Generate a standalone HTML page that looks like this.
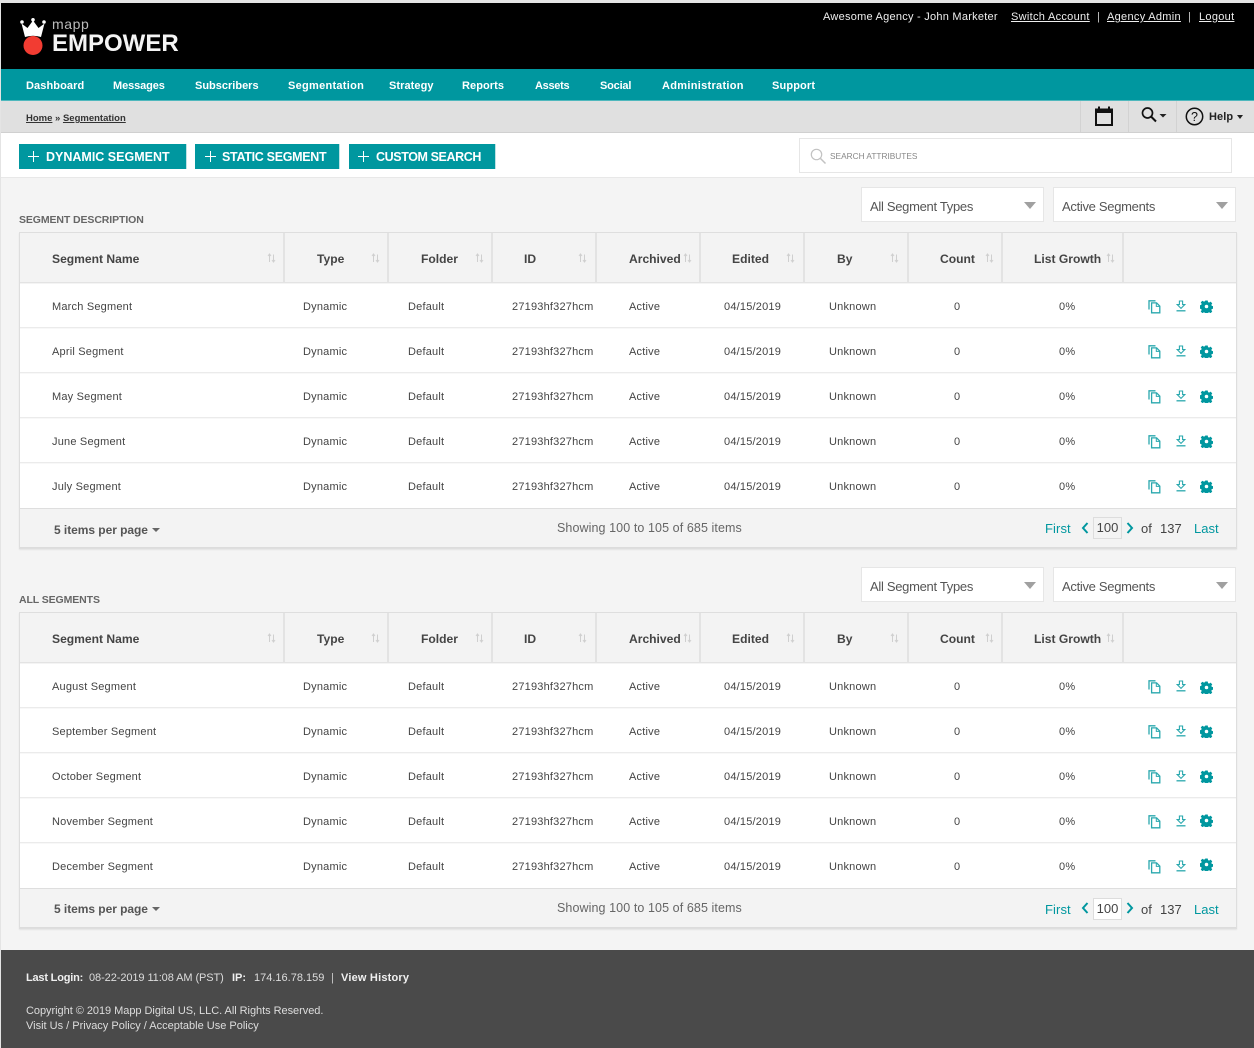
<!DOCTYPE html>
<html>
<head>
<meta charset="utf-8">
<style>
*{box-sizing:border-box}
html,body{margin:0;padding:0}
body{width:1254px;height:1048px;position:relative;overflow:hidden;background:#f4f4f4;font-family:"Liberation Sans",sans-serif;color:#444}
.a{position:absolute;white-space:nowrap}
a{color:inherit}
.nav{position:absolute;top:80px;font-size:11px;font-weight:bold;color:#fff;line-height:13px;white-space:nowrap}
.btn{position:absolute;top:144px;height:25px;background:#00979f;color:#fff;font-size:12.5px;font-weight:bold;line-height:26px;white-space:nowrap;border-right:1px solid #bfe2e4}
.btn i{position:absolute;left:10px;top:7px;width:11px;height:11px}
.btn i:before{content:"";position:absolute;left:0;top:4.5px;width:11px;height:1.6px;background:#fff}
.btn i:after{content:"";position:absolute;left:4.7px;top:0;width:1.6px;height:11px;background:#fff}
.btn span{position:absolute;left:27px}
.sel{position:absolute;height:35px;width:183px;background:#fff;border:1px solid #e6e6e6;font-size:13px;line-height:37px;padding-left:8px;color:#555;letter-spacing:-.3px}
.sel:after{content:"";position:absolute;right:7px;top:14px;border-left:6px solid transparent;border-right:6px solid transparent;border-top:7px solid #a0a0a0}
.lbl{position:absolute;left:19px;font-size:10.5px;font-weight:bold;color:#666;letter-spacing:-.1px;line-height:13px}
.tb{position:absolute;left:19px;width:1218px;height:317px;border:1px solid #dedede;background:#fff;box-shadow:0 1px 1px #e4e4e4}
.hd{position:absolute;left:0;top:0;width:1216px;height:50px;background:#f3f3f3;border-bottom:1px solid #e3e3e3;box-shadow:0 1px 0 #f4f4f4}
.hd b{position:absolute;top:19px;font-size:12.1px;line-height:15px;color:#444;white-space:nowrap}
.hd u{position:absolute;top:0;width:2px;height:50px;background:#e3e3e3}
.hd svg{position:absolute;top:20px}
.r{position:absolute;left:0;width:1216px;height:45px;border-bottom:1px solid #ebebeb;box-shadow:0 1px 0 #f8f8f8;font-size:11px;color:#444;letter-spacing:.2px}
.r span{position:absolute;top:17px;line-height:14px;white-space:nowrap}
.r svg{position:absolute}
.ft{position:absolute;left:0;top:275px;width:1216px;height:40px;background:#f3f3f3;border-top:1px solid #dedede;border-bottom:1px solid #dcdcdc}
.ft span{position:absolute;white-space:nowrap;line-height:15px}
.l{color:#00979f}
</style>
</head>
<body>
<svg width="0" height="0" style="position:absolute">
<defs>
<symbol id="sort" viewBox="0 0 9 10"><path d="M2.500 9V1.500M1 3l1.500-2L4 3" stroke="#cfcfcf" stroke-width="1" fill="none"/><path d="M6.500 1.500V9M5 7l1.500 2L8 7" stroke="#cfcfcf" stroke-width="1" fill="none"/></symbol>
<symbol id="copy" viewBox="0 0 13 14"><path d="M1 9.500V.8h6.500" stroke="#2aa8ae" stroke-width="1.300" fill="none"/><path d="M3.600 2.900h5l3.200 3.200v6.700H3.600z" stroke="#2aa8ae" stroke-width="1.300" fill="#fff"/><path d="M8.300 2.900v3.500h3.500" stroke="#2aa8ae" stroke-width="1" fill="none"/></symbol>
<symbol id="dl" viewBox="0 0 10 13"><path d="M3.400 1h3.200v3.600h2.200L5 8.400 1.200 4.600h2.200z" stroke="#2aa8ae" stroke-width="1.100" fill="none"/><path d="M.5 10.800h9" stroke="#2aa8ae" stroke-width="1.300"/></symbol>
<symbol id="gear" viewBox="0 0 14 14"><path fill="#00979f" fill-rule="evenodd" d="M5.700.5h2.600l.4 1.800 1.100.5 1.600-1 1.800 1.800-1 1.600.5 1.100 1.800.4v2.600l-1.800.4-.5 1.100 1 1.600-1.800 1.800-1.600-1-1.100.5-.4 1.800H5.700l-.4-1.800-1.100-.5-1.600 1-1.800-1.800 1-1.600-.5-1.100-1.800-.4V5.700l1.800-.4.5-1.100-1-1.600L2.600.8l1.600 1 1.100-.5zM7 5.100a1.900 1.900 0 1 0 0 3.800 1.900 1.900 0 0 0 0-3.800z"/></symbol>
</defs>
</svg>

<!-- top -->
<div class="a" style="left:0;top:0;width:1254px;height:3px;background:#e4e4e4"></div>
<div class="a" style="left:0;top:0;width:1px;height:1048px;background:#e4e4e4;z-index:5"></div>
<div class="a" style="left:0;top:3px;width:1254px;height:66px;background:#000"></div>
<svg class="a" style="left:20px;top:18px" width="27" height="38" viewBox="0 0 27 38">
<path d="M5 19L1.500 5.500 7.500 10 13 2.500 18.500 10l6-4.500L21 19q-8-2.500-16 0z" fill="#fff"/>
<circle cx="2" cy="4" r="1.800" fill="#fff"/><circle cx="13" cy="1.800" r="1.800" fill="#fff"/><circle cx="24" cy="4" r="1.800" fill="#fff"/>
<circle cx="13" cy="27.500" r="9.500" fill="#f23c32"/>
</svg>
<div class="a" style="left:52px;top:17px;font-size:14px;line-height:15px;color:#bbb;letter-spacing:.6px">mapp</div>
<div class="a" style="left:52px;top:31px;font-size:24px;line-height:26px;font-weight:bold;color:#f4f4f4">EMPOWER</div>
<div class="a" style="left:823px;top:11px;font-size:11px;line-height:13px;color:#eee;letter-spacing:.25px">Awesome Agency - John Marketer</div>
<div class="a" style="left:1011px;top:11px;font-size:11px;line-height:13px;color:#eee;letter-spacing:.3px"><a href="#">Switch Account</a></div>
<div class="a" style="left:1097px;top:11px;font-size:11px;line-height:13px;color:#ccc">|</div>
<div class="a" style="left:1107px;top:11px;font-size:11px;line-height:13px;color:#eee;letter-spacing:.3px"><a href="#">Agency Admin</a></div>
<div class="a" style="left:1188px;top:11px;font-size:11px;line-height:13px;color:#ccc">|</div>
<div class="a" style="left:1199px;top:11px;font-size:11px;line-height:13px;color:#eee;letter-spacing:.3px"><a href="#">Logout</a></div>

<!-- nav -->
<div class="a" style="left:0;top:69px;width:1254px;height:32px;background:#00979f;border-bottom:1px solid #4fb8bd"></div>
<div class="nav" style="left:26px;letter-spacing:.1px">Dashboard</div>
<div class="nav" style="left:113px;letter-spacing:-.1px">Messages</div>
<div class="nav" style="left:195px">Subscribers</div>
<div class="nav" style="left:288px;letter-spacing:.28px">Segmentation</div>
<div class="nav" style="left:389px;letter-spacing:.07px">Strategy</div>
<div class="nav" style="left:462px;letter-spacing:.07px">Reports</div>
<div class="nav" style="left:535px;letter-spacing:-.3px">Assets</div>
<div class="nav" style="left:600px;letter-spacing:-.2px">Social</div>
<div class="nav" style="left:662px;letter-spacing:.3px">Administration</div>
<div class="nav" style="left:772px;letter-spacing:.14px">Support</div>

<!-- breadcrumb bar -->
<div class="a" style="left:0;top:101px;width:1254px;height:32px;background:#e0e0e0;border-bottom:1px solid #d0d0d0"></div>
<div class="a" style="left:26px;top:113px;font-size:9.500px;line-height:12px;font-weight:bold;color:#333"><a href="#">Home</a> » <a href="#">Segmentation</a></div>
<div class="a" style="left:1080px;top:101px;width:1px;height:31px;background:#d2d2d2"></div>
<div class="a" style="left:1128px;top:101px;width:1px;height:31px;background:#d2d2d2"></div>
<div class="a" style="left:1176px;top:101px;width:1px;height:31px;background:#d2d2d2"></div>
<svg class="a" style="left:1094px;top:105px" width="20" height="22" viewBox="0 0 20 22"><path d="M2 4.500h16v15.500H2z" fill="none" stroke="#111" stroke-width="2"/><path d="M1.500 4h17v4h-17z" fill="#111"/><path d="M5 1.500v3M15 1.500v3" stroke="#111" stroke-width="2"/></svg>
<svg class="a" style="left:1141px;top:106px" width="27" height="18" viewBox="0 0 27 18"><circle cx="6.500" cy="7" r="5" fill="none" stroke="#111" stroke-width="1.700"/><path d="M10 10.500l5 5" stroke="#111" stroke-width="2"/><path d="M18.500 8h7L22 11.500z" fill="#222"/></svg>
<svg class="a" style="left:1185px;top:107px" width="19" height="19" viewBox="0 0 19 19"><circle cx="9.500" cy="9.500" r="8.200" fill="none" stroke="#111" stroke-width="1.500"/><text x="9.500" y="14" text-anchor="middle" font-family="Liberation Sans" font-size="12.500" fill="#111">?</text></svg>
<div class="a" style="left:1209px;top:111px;font-size:11px;line-height:13px;font-weight:bold;color:#222;letter-spacing:.1px">Help</div>
<div class="a" style="left:1237px;top:115px;border-left:3.500px solid transparent;border-right:3.500px solid transparent;border-top:4px solid #222"></div>

<!-- action bar -->
<div class="a" style="left:0;top:133px;width:1254px;height:45px;background:#fff;border-bottom:1px solid #e8e8e8"></div>
<div class="btn" style="left:19px;width:168px"><i style="left:9px"></i><span>DYNAMIC SEGMENT</span></div>
<div class="btn" style="left:195px;width:145px"><i></i><span style="letter-spacing:-.3px">STATIC SEGMENT</span></div>
<div class="btn" style="left:349px;width:147px"><i style="left:9px"></i><span style="letter-spacing:-.4px">CUSTOM SEARCH</span></div>
<div class="a" style="left:799px;top:138px;width:433px;height:35px;background:#fff;border:1px solid #e6e6e6"></div>
<svg class="a" style="left:810px;top:148px" width="17" height="17" viewBox="0 0 17 17"><circle cx="6.500" cy="6.500" r="5.200" fill="none" stroke="#c2c2c2" stroke-width="1.200"/><path d="M10.500 10.500l5 5" stroke="#c2c2c2" stroke-width="1.500"/></svg>
<div class="a" style="left:830px;top:150px;font-size:8.300px;line-height:12px;color:#888">SEARCH ATTRIBUTES</div>

<!-- section 1 -->
<div class="lbl" style="top:214px">SEGMENT DESCRIPTION</div>
<div class="sel" style="left:861px;top:187px">All Segment Types</div>
<div class="sel" style="left:1053px;top:187px">Active Segments</div>

<div class="tb" style="top:232px">
<div class="hd">
<b style="left:32px">Segment Name</b><svg style="left:247px" width="9" height="10"><use href="#sort"/></svg><u style="left:263px"></u>
<b style="left:297px">Type</b><svg style="left:351px" width="9" height="10"><use href="#sort"/></svg><u style="left:367px"></u>
<b style="left:401px">Folder</b><svg style="left:455px" width="9" height="10"><use href="#sort"/></svg><u style="left:471px"></u>
<b style="left:504px">ID</b><svg style="left:558px" width="9" height="10"><use href="#sort"/></svg><u style="left:575px"></u>
<b style="left:609px">Archived</b><svg style="left:663px" width="9" height="10"><use href="#sort"/></svg><u style="left:679px"></u>
<b style="left:712px">Edited</b><svg style="left:766px" width="9" height="10"><use href="#sort"/></svg><u style="left:783px"></u>
<b style="left:817px">By</b><svg style="left:870px" width="9" height="10"><use href="#sort"/></svg><u style="left:887px"></u>
<b style="left:920px">Count</b><svg style="left:965px" width="9" height="10"><use href="#sort"/></svg><u style="left:981px"></u>
<b style="left:1014px">List Growth</b><svg style="left:1086px" width="9" height="10"><use href="#sort"/></svg><u style="left:1102px"></u>
</div>
<div class="r" style="top:50px"><span style="left:32px">March Segment</span><span style="left:283px">Dynamic</span><span style="left:388px">Default</span><span style="left:492px">27193hf327hcm</span><span style="left:609px">Active</span><span style="left:704px">04/15/2019</span><span style="left:809px">Unknown</span><span style="left:934px">0</span><span style="left:1039px">0%</span><svg style="left:1128px;top:17px" width="13" height="14"><use href="#copy"/></svg><svg style="left:1156px;top:17px" width="10" height="13"><use href="#dl"/></svg><svg style="left:1180px;top:17px" width="13" height="13"><use href="#gear"/></svg></div>
<div class="r" style="top:95px"><span style="left:32px">April Segment</span><span style="left:283px">Dynamic</span><span style="left:388px">Default</span><span style="left:492px">27193hf327hcm</span><span style="left:609px">Active</span><span style="left:704px">04/15/2019</span><span style="left:809px">Unknown</span><span style="left:934px">0</span><span style="left:1039px">0%</span><svg style="left:1128px;top:17px" width="13" height="14"><use href="#copy"/></svg><svg style="left:1156px;top:17px" width="10" height="13"><use href="#dl"/></svg><svg style="left:1180px;top:17px" width="13" height="13"><use href="#gear"/></svg></div>
<div class="r" style="top:140px"><span style="left:32px">May Segment</span><span style="left:283px">Dynamic</span><span style="left:388px">Default</span><span style="left:492px">27193hf327hcm</span><span style="left:609px">Active</span><span style="left:704px">04/15/2019</span><span style="left:809px">Unknown</span><span style="left:934px">0</span><span style="left:1039px">0%</span><svg style="left:1128px;top:17px" width="13" height="14"><use href="#copy"/></svg><svg style="left:1156px;top:17px" width="10" height="13"><use href="#dl"/></svg><svg style="left:1180px;top:17px" width="13" height="13"><use href="#gear"/></svg></div>
<div class="r" style="top:185px"><span style="left:32px">June Segment</span><span style="left:283px">Dynamic</span><span style="left:388px">Default</span><span style="left:492px">27193hf327hcm</span><span style="left:609px">Active</span><span style="left:704px">04/15/2019</span><span style="left:809px">Unknown</span><span style="left:934px">0</span><span style="left:1039px">0%</span><svg style="left:1128px;top:17px" width="13" height="14"><use href="#copy"/></svg><svg style="left:1156px;top:17px" width="10" height="13"><use href="#dl"/></svg><svg style="left:1180px;top:17px" width="13" height="13"><use href="#gear"/></svg></div>
<div class="r" style="top:230px;border-bottom:0;box-shadow:none"><span style="left:32px">July Segment</span><span style="left:283px">Dynamic</span><span style="left:388px">Default</span><span style="left:492px">27193hf327hcm</span><span style="left:609px">Active</span><span style="left:704px">04/15/2019</span><span style="left:809px">Unknown</span><span style="left:934px">0</span><span style="left:1039px">0%</span><svg style="left:1128px;top:17px" width="13" height="14"><use href="#copy"/></svg><svg style="left:1156px;top:17px" width="10" height="13"><use href="#dl"/></svg><svg style="left:1180px;top:17px" width="13" height="13"><use href="#gear"/></svg></div>
<div class="ft">
<span style="left:34px;top:14px;font-size:12px;font-weight:bold;color:#555;letter-spacing:-.05px">5 items per page</span><span style="left:132px;top:19px;border-left:4px solid transparent;border-right:4px solid transparent;border-top:4px solid #666"></span>
<span style="left:537px;top:12px;font-size:12.500px;color:#666;letter-spacing:.09px">Showing 100 to 105 of 685 items</span>
<span class="l" style="left:1025px;top:12px;font-size:13px;letter-spacing:.1px">First</span>
<svg style="position:absolute;left:1061px;top:13px" width="8" height="12" viewBox="0 0 8 12"><path d="M6.500 1L2 6l4.500 5" stroke="#00979f" stroke-width="2" fill="none"/></svg>
<span style="left:1073px;top:8px;width:29px;height:22px;border:1px solid #ddd;text-align:center;font-size:13px;line-height:20px;color:#444">100</span>
<svg style="position:absolute;left:1106px;top:13px" width="8" height="12" viewBox="0 0 8 12"><path d="M1.500 1L6 6l-4.500 5" stroke="#00979f" stroke-width="2" fill="none"/></svg>
<span style="left:1121px;top:12px;font-size:13px;color:#444">of</span>
<span style="left:1140px;top:12px;font-size:13px;color:#444">137</span>
<span class="l" style="left:1174px;top:12px;font-size:13px">Last</span>
</div>
</div>

<!-- section 2 -->
<div class="lbl" style="top:594px">ALL SEGMENTS</div>
<div class="sel" style="left:861px;top:567px">All Segment Types</div>
<div class="sel" style="left:1053px;top:567px">Active Segments</div>

<div class="tb" style="top:612px">
<div class="hd">
<b style="left:32px">Segment Name</b><svg style="left:247px" width="9" height="10"><use href="#sort"/></svg><u style="left:263px"></u>
<b style="left:297px">Type</b><svg style="left:351px" width="9" height="10"><use href="#sort"/></svg><u style="left:367px"></u>
<b style="left:401px">Folder</b><svg style="left:455px" width="9" height="10"><use href="#sort"/></svg><u style="left:471px"></u>
<b style="left:504px">ID</b><svg style="left:558px" width="9" height="10"><use href="#sort"/></svg><u style="left:575px"></u>
<b style="left:609px">Archived</b><svg style="left:663px" width="9" height="10"><use href="#sort"/></svg><u style="left:679px"></u>
<b style="left:712px">Edited</b><svg style="left:766px" width="9" height="10"><use href="#sort"/></svg><u style="left:783px"></u>
<b style="left:817px">By</b><svg style="left:870px" width="9" height="10"><use href="#sort"/></svg><u style="left:887px"></u>
<b style="left:920px">Count</b><svg style="left:965px" width="9" height="10"><use href="#sort"/></svg><u style="left:981px"></u>
<b style="left:1014px">List Growth</b><svg style="left:1086px" width="9" height="10"><use href="#sort"/></svg><u style="left:1102px"></u>
</div>
<div class="r" style="top:50px"><span style="left:32px">August Segment</span><span style="left:283px">Dynamic</span><span style="left:388px">Default</span><span style="left:492px">27193hf327hcm</span><span style="left:609px">Active</span><span style="left:704px">04/15/2019</span><span style="left:809px">Unknown</span><span style="left:934px">0</span><span style="left:1039px">0%</span><svg style="left:1128px;top:17px" width="13" height="14"><use href="#copy"/></svg><svg style="left:1156px;top:17px" width="10" height="13"><use href="#dl"/></svg><svg style="left:1180px;top:18px" width="13" height="13"><use href="#gear"/></svg></div>
<div class="r" style="top:95px"><span style="left:32px">September Segment</span><span style="left:283px">Dynamic</span><span style="left:388px">Default</span><span style="left:492px">27193hf327hcm</span><span style="left:609px">Active</span><span style="left:704px">04/15/2019</span><span style="left:809px">Unknown</span><span style="left:934px">0</span><span style="left:1039px">0%</span><svg style="left:1128px;top:17px" width="13" height="14"><use href="#copy"/></svg><svg style="left:1156px;top:17px" width="10" height="13"><use href="#dl"/></svg><svg style="left:1180px;top:17px" width="13" height="13"><use href="#gear"/></svg></div>
<div class="r" style="top:140px"><span style="left:32px">October Segment</span><span style="left:283px">Dynamic</span><span style="left:388px">Default</span><span style="left:492px">27193hf327hcm</span><span style="left:609px">Active</span><span style="left:704px">04/15/2019</span><span style="left:809px">Unknown</span><span style="left:934px">0</span><span style="left:1039px">0%</span><svg style="left:1128px;top:17px" width="13" height="14"><use href="#copy"/></svg><svg style="left:1156px;top:17px" width="10" height="13"><use href="#dl"/></svg><svg style="left:1180px;top:17px" width="13" height="13"><use href="#gear"/></svg></div>
<div class="r" style="top:185px"><span style="left:32px">November Segment</span><span style="left:283px">Dynamic</span><span style="left:388px">Default</span><span style="left:492px">27193hf327hcm</span><span style="left:609px">Active</span><span style="left:704px">04/15/2019</span><span style="left:809px">Unknown</span><span style="left:934px">0</span><span style="left:1039px">0%</span><svg style="left:1128px;top:17px" width="13" height="14"><use href="#copy"/></svg><svg style="left:1156px;top:17px" width="10" height="13"><use href="#dl"/></svg><svg style="left:1180px;top:16px" width="13" height="13"><use href="#gear"/></svg></div>
<div class="r" style="top:230px;border-bottom:0;box-shadow:none"><span style="left:32px">December Segment</span><span style="left:283px">Dynamic</span><span style="left:388px">Default</span><span style="left:492px">27193hf327hcm</span><span style="left:609px">Active</span><span style="left:704px">04/15/2019</span><span style="left:809px">Unknown</span><span style="left:934px">0</span><span style="left:1039px">0%</span><svg style="left:1128px;top:17px" width="13" height="14"><use href="#copy"/></svg><svg style="left:1156px;top:17px" width="10" height="13"><use href="#dl"/></svg><svg style="left:1180px;top:15px" width="13" height="13"><use href="#gear"/></svg></div>
<div class="ft">
<span style="left:34px;top:13px;font-size:12px;font-weight:bold;color:#555;letter-spacing:-.05px">5 items per page</span><span style="left:132px;top:18px;border-left:4px solid transparent;border-right:4px solid transparent;border-top:4px solid #666"></span>
<span style="left:537px;top:12px;font-size:12.500px;color:#666;letter-spacing:.09px">Showing 100 to 105 of 685 items</span>
<span class="l" style="left:1025px;top:13px;font-size:13px;letter-spacing:.1px">First</span>
<svg style="position:absolute;left:1061px;top:13px" width="8" height="12" viewBox="0 0 8 12"><path d="M6.500 1L2 6l4.500 5" stroke="#00979f" stroke-width="2" fill="none"/></svg>
<span style="left:1073px;top:9px;width:29px;height:22px;border:1px solid #ddd;text-align:center;font-size:13px;line-height:20px;color:#444;background:#fff">100</span>
<svg style="position:absolute;left:1106px;top:13px" width="8" height="12" viewBox="0 0 8 12"><path d="M1.500 1L6 6l-4.500 5" stroke="#00979f" stroke-width="2" fill="none"/></svg>
<span style="left:1121px;top:13px;font-size:13px;color:#444">of</span>
<span style="left:1140px;top:13px;font-size:13px;color:#444">137</span>
<span class="l" style="left:1174px;top:13px;font-size:13px">Last</span>
</div>
</div>

<!-- footer -->
<div class="a" style="left:0;top:950px;width:1254px;height:98px;background:#4a4a4a"></div>
<div class="a" style="left:26px;top:972px;font-size:11px;line-height:13px;font-weight:bold;color:#f0f0f0;letter-spacing:-.2px">Last Login:</div>
<div class="a" style="left:89px;top:972px;font-size:11px;line-height:13px;color:#ddd;letter-spacing:-.08px">08-22-2019 11:08 AM (PST)</div>
<div class="a" style="left:232px;top:972px;font-size:11px;line-height:13px;font-weight:bold;color:#f0f0f0">IP:</div>
<div class="a" style="left:254px;top:972px;font-size:11px;line-height:13px;color:#ddd">174.16.78.159</div>
<div class="a" style="left:331px;top:972px;font-size:11px;line-height:13px;color:#ccc">|</div>
<div class="a" style="left:341px;top:972px;font-size:11px;line-height:13px;font-weight:bold;color:#f0f0f0;letter-spacing:.2px">View History</div>
<div class="a" style="left:26px;top:1005px;font-size:11px;line-height:13px;color:#ddd;letter-spacing:-.04px">Copyright © 2019 Mapp Digital US, LLC. All Rights Reserved.</div>
<div class="a" style="left:26px;top:1020px;font-size:11px;line-height:13px;color:#ddd">Visit Us / Privacy Policy / Acceptable Use Policy</div>
</body>
</html>
